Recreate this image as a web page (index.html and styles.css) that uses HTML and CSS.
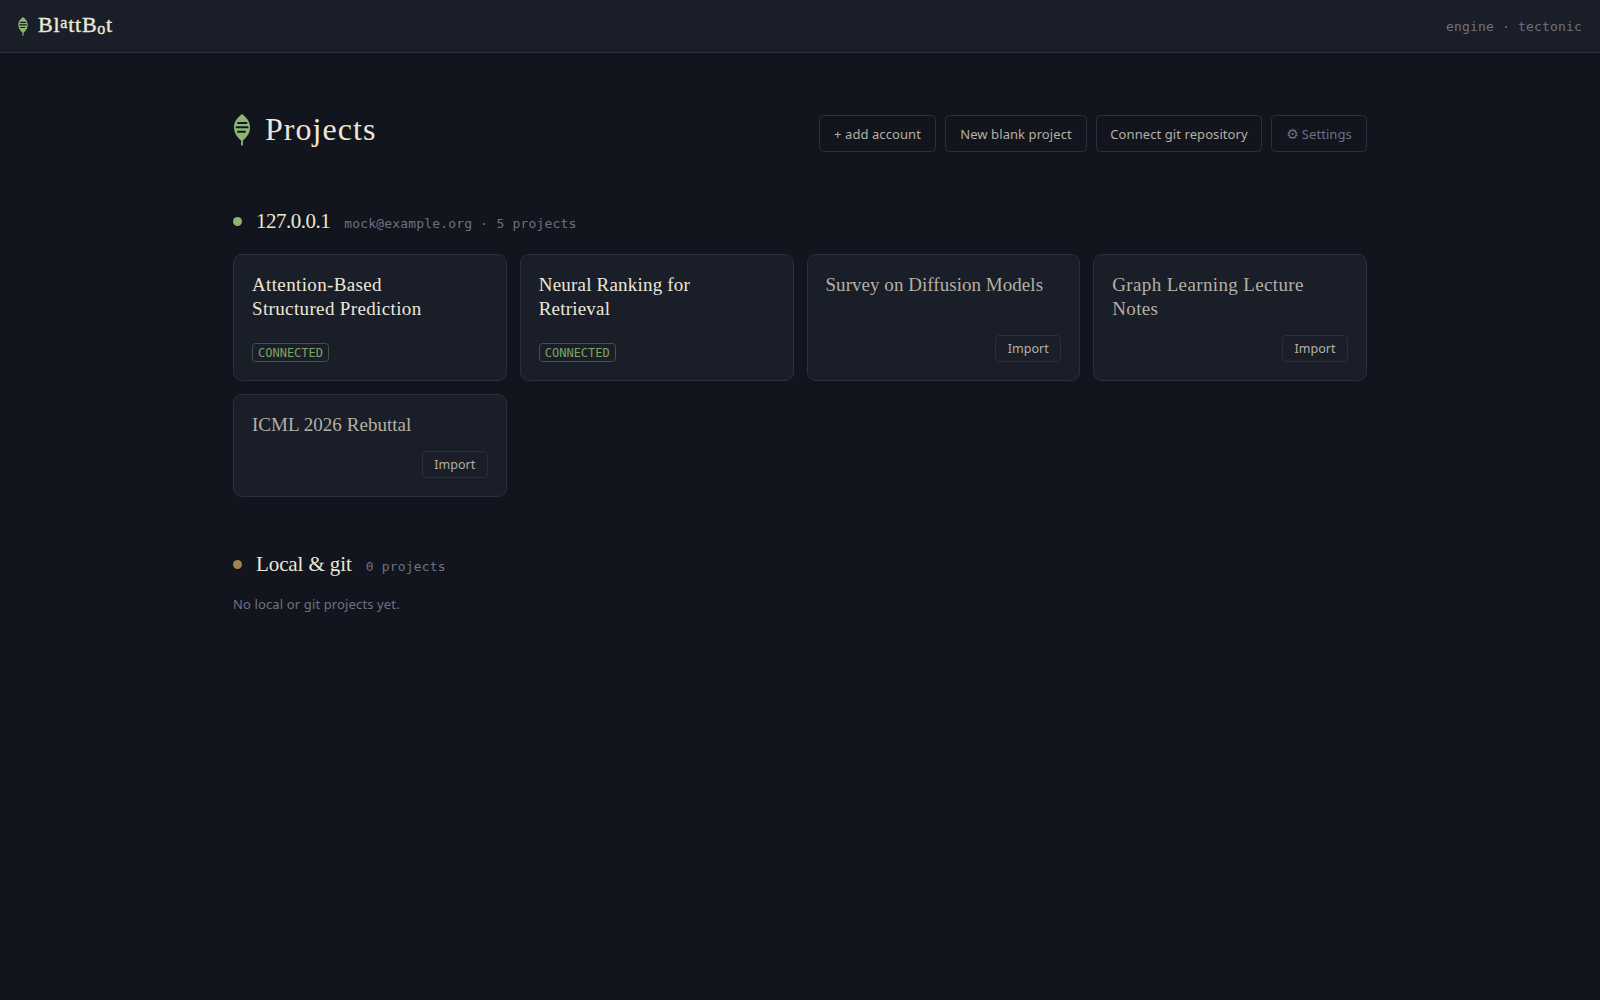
FILE: index.html
```html
<!DOCTYPE html>
<html lang="en">
<head>
<meta charset="utf-8">
<title>BlattBot</title>
<link rel="stylesheet" href="styles.css">
</head>
<body>
<svg class="defs" width="0" height="0" aria-hidden="true">
  <symbol id="leaf" viewBox="0 0 16 32">
    <path class="leaf-body" d="M8 0C13 3.6 16 8.2 16 13.2C16 18.700 13 23 8.900 26.400V31.500H7.100V26.400C3 23 0 18.700 0 13.200C0 8.200 3 3.600 8 0Z"/>
    <path class="leaf-lines" d="M4 9H12.500M2.600 13.300H13.600M4 17.700H11"/>
  </symbol>
</svg>
<header class="topbar">
  <a class="brand">
    <svg class="brand-leaf"><use href="#leaf"/></svg>
    <span class="brand-name">Bl<span class="up">a</span>ttB<span class="down">o</span>t</span>
  </a>
  <span class="engine">engine · tectonic</span>
</header>
<main class="page">
  <div class="page-head">
    <div class="heading">
      <svg class="heading-leaf"><use href="#leaf"/></svg>
      <h1>Projects</h1>
    </div>
    <div class="actions">
      <button class="btn add">+ add account</button>
      <button class="btn blank">New blank project</button>
      <button class="btn connect">Connect git repository</button>
      <button class="btn settings"><span class="gear">⚙</span>Settings</button>
    </div>
  </div>

  <section class="group">
    <div class="group-head">
      <span class="dot"></span>
      <h2 class="host">127.0.0.1</h2>
      <span class="meta">mock@example.org · 5 projects</span>
    </div>
    <div class="grid">
      <article class="card linked">
        <h3 class="loose">Attention-Based<br>Structured Prediction</h3>
        <span class="badge">CONNECTED</span>
      </article>
      <article class="card linked">
        <h3 class="medium">Neural Ranking for<br>Retrieval</h3>
        <span class="badge">CONNECTED</span>
      </article>
      <article class="card">
        <h3>Survey on Diffusion Models</h3>
        <button class="import">Import</button>
      </article>
      <article class="card">
        <h3 class="loose">Graph Learning Lecture<br>Notes</h3>
        <button class="import">Import</button>
      </article>
      <article class="card">
        <h3>ICML 2026 Rebuttal</h3>
        <button class="import">Import</button>
      </article>
    </div>
  </section>

  <section class="group local">
    <div class="group-head">
      <span class="dot amber"></span>
      <h2>Local &amp; git</h2>
      <span class="meta">0 projects</span>
    </div>
    <p class="empty">No local or git projects yet.</p>
  </section>
</main>
</body>
</html>
```
FILE: styles.css
```css
:root {
  --bg: #12151d;
  --panel: #1a1e28;
  --line: #2b2f3e;
  --text: #ece6d8;
  --dim: #b4b0a4;
  --muted: #6e7183;
  --green: #8fb573;
  --serif: "Liberation Serif", serif;
  --sans: "Noto Sans", sans-serif;
  --mono: "DejaVu Sans Mono", monospace;
}
* { box-sizing: border-box; }
body { margin: 0; min-height: 100vh; background: var(--bg); color: var(--text); font: 13px/1.5 var(--sans); }
h1, h2, h3, p { margin: 0; font-weight: 400; }
button { font-family: var(--sans); background: transparent; border: 1px solid var(--line); color: var(--dim); padding: 0; white-space: nowrap; }
.defs { display: block; }
.leaf-body { fill: var(--green); }
.leaf-lines { fill: none; stroke: var(--bg); stroke-width: 1.9; stroke-linecap: round; }

.topbar { height: 53px; padding: 0 18px; display: flex; align-items: center; justify-content: space-between; background: var(--panel); border-bottom: 1px solid var(--line); }
.brand { display: flex; align-items: center; gap: 10px; }
.brand-leaf { width: 10px; height: 19px; }
.brand-name { font: 22px/30px var(--serif); letter-spacing: 0.75px; -webkit-text-stroke: 0.4px var(--text); padding-bottom: 2px; }
.up, .down { font-size: 16px; line-height: 0; position: relative; }
.up { top: -4px; }
.down { top: 2px; }
.engine { font: 13px/20px var(--mono); letter-spacing: 0.18px; color: var(--muted); padding-top: 1px; }

.page { width: 1134px; margin: 0 auto; padding-top: 58px; }
.page-head { display: flex; justify-content: space-between; align-items: flex-start; height: 94px; }
.heading { display: flex; align-items: flex-start; gap: 15px; padding-top: 3px; padding-left: 1px; }
.heading-leaf { width: 16px; height: 32px; }
h1 { font: 32px/36px var(--serif); letter-spacing: 1.05px; margin-top: -3px; }
.actions { display: flex; gap: 9px; padding-top: 4px; }
.btn { height: 37px; border-radius: 4.500px; font-size: 13px; text-align: center; letter-spacing: 0.08px; }
.add { width: 117px; }
.blank { width: 142px; }
.connect { width: 166px; }
.settings { width: 96px; color: var(--muted); display: flex; align-items: center; justify-content: center; gap: 3px; }
.gear { font: 14px/18px "DejaVu Sans", sans-serif; }

.group-head { display: flex; align-items: baseline; height: 32px; }
.dot { width: 9px; height: 9px; border-radius: 50%; background: var(--green); margin: 0 14px 0 0; transform: translateY(-2px); }
.amber { background: #a5824a; }
h2 { font: 21px/32px var(--serif); letter-spacing: -0.1px; }
.host { letter-spacing: -0.5px; }
.meta { font: 13px/20px var(--mono); letter-spacing: 0.18px; color: var(--muted); margin-left: 14px; }
.grid { display: grid; grid-template-columns: repeat(4, 1fr); gap: 13px; margin-top: 17px; }
.card { background: var(--panel); border: 1px solid var(--line); border-radius: 9px; padding: 18px; display: flex; flex-direction: column; justify-content: space-between; align-items: flex-start; gap: 14px; }
.card h3 { font: 19px/24px var(--serif); letter-spacing: 0.04px; color: var(--dim); white-space: nowrap; }
.card.linked h3 { color: var(--text); }
.card h3.loose { letter-spacing: 0.36px; }
.card h3.medium { letter-spacing: 0.2px; }
.badge { width: 77px; height: 19px; border: 1px solid #415440; border-radius: 3.5px; color: #7da364; font: 12px/18px var(--mono); text-align: center; }
.import { align-self: flex-end; width: 66px; height: 27px; border-radius: 4px; font-size: 12.5px; }
.local { margin-top: 51px; }
.empty { color: var(--muted); font-size: 13px; line-height: 20px; letter-spacing: 0.13px; margin-top: 14px; }
```
